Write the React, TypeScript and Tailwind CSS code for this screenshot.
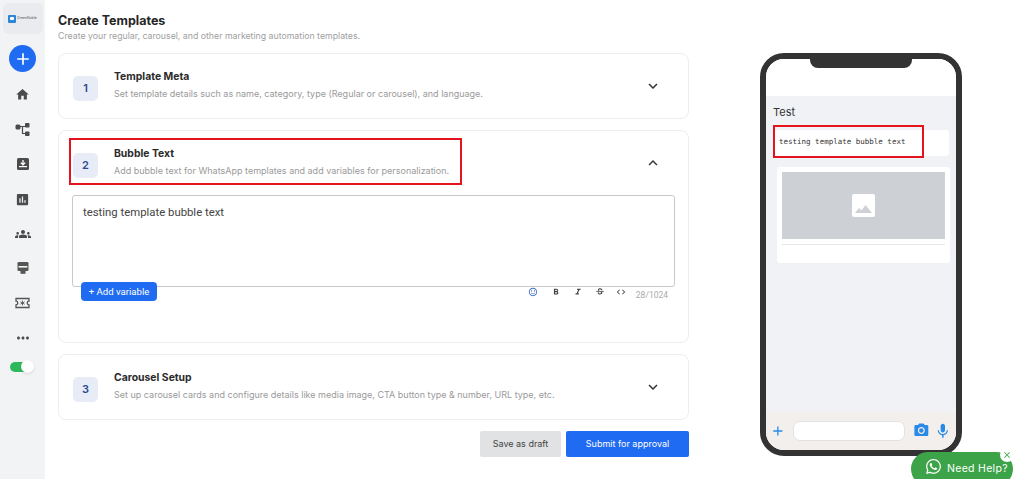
import React from "react";
import {
  MdHome, MdAssessment, MdGroups, MdMoreHoriz, MdPhotoCamera, MdMic, MdAdd, MdClose,
  MdKeyboardArrowDown, MdKeyboardArrowUp, MdOutlineSentimentSatisfied, MdFormatBold,
  MdFormatItalic, MdStrikethroughS, MdCode,
} from "react-icons/md";
import { FaWhatsapp } from "react-icons/fa";

const FlowIcon = () => (
  <svg width="15" height="15" viewBox="0 0 15 15" fill="#4b4b4b">
    <rect x="0.5" y="2.5" width="5" height="5" rx="1.5" />
    <rect x="10" y="1" width="4.5" height="4.5" rx="0.8" />
    <rect x="10" y="9.5" width="4.5" height="4.5" rx="0.8" />
    <path d="M5 4.5h6M7.5 4.5v7h3" stroke="#4b4b4b" strokeWidth="1.2" fill="none" />
  </svg>
);
const InboxIcon = () => (
  <svg width="14" height="14" viewBox="0 0 14 14">
    <rect x="1" y="1" width="12" height="12" rx="1.5" fill="#4b4b4b" />
    <path d="M7 3v4.5M4.8 5.6 7 7.8l2.2-2.2" stroke="#fff" strokeWidth="1.3" fill="none" />
    <path d="M3 9.6h8" stroke="#fff" strokeWidth="1.2" />
  </svg>
);
const MonitorIcon = () => (
  <svg width="14" height="14" viewBox="0 0 14 14" fill="#555">
    <rect x="1.5" y="1" width="11" height="9" rx="1.2" />
    <rect x="2.6" y="5" width="8.8" height="1.6" fill="#f2f3f4" />
    <rect x="4.5" y="10" width="5" height="2.8" />
  </svg>
);
const TicketIcon = () => (
  <svg width="15" height="14" viewBox="0 0 15 14" fill="none">
    <path
      d="M1 2.5h13v2.7a1.8 1.8 0 0 0 0 3.6v2.7H1V8.8a1.8 1.8 0 0 0 0-3.6z"
      stroke="#555"
      strokeWidth="1.3"
    />
    <path d="M7.5 4.6v4.8M5.4 5.8l4.2 2.4M9.6 5.8 5.4 8.2" stroke="#555" strokeWidth="0.9" />
  </svg>
);
const Logo = () => (
  <div className="flex items-center gap-[1px]">
    <div className="w-[8px] h-[8px] rounded-[1px] bg-[#2f86d6] flex items-center justify-center">
      <div className="w-[4px] h-[3px] rounded-[1px] bg-white" />
    </div>
    <span className="text-[3.5px] leading-none text-[#555] font-['Inter',sans-serif]">GreenNoble</span>
  </div>
);

function SideItem({ children, className }: { children: React.ReactNode; className: string }) {
  return <div className={`flex items-center justify-center ${className}`}>{children}</div>;
}

function StepHeader({ n, title, desc, open }: { n: string; title: string; desc: string; open?: boolean }) {
  return (
    <div className="flex items-start h-[64px] pl-[14px] pr-[26px]">
      <div className="mt-[22px] w-[25px] h-[25px] rounded-[5px] bg-[#e7ecf6] flex items-center justify-center text-[11px] font-semibold text-[#2b4a8f]">
        {n}
      </div>
      <div className="ml-[16px] mt-[16px] flex-1">
        <div className="text-[10.4px] leading-[14px] font-bold text-[#2b2b2b]">{title}</div>
        <div className="mt-[3px] text-[9px] leading-[14px] text-[#9a9a9a]">{desc}</div>
      </div>
      <div className="mt-[23px]">
        {open ? <MdKeyboardArrowUp size={18} color="#333" /> : <MdKeyboardArrowDown size={18} color="#333" />}
      </div>
    </div>
  );
}

export default function App() {
  return (
    <div className="relative flex h-[479px] w-[1024px] overflow-hidden bg-white font-['Inter',sans-serif]">
      {/* Sidebar */}
      <aside className="w-[45px] shrink-0 bg-[#f2f3f4] flex flex-col items-center">
        <div className="mt-[3px] w-[40px] h-[31px] rounded-[6px] bg-[#e9ebef] flex items-center justify-center">
          <Logo />
        </div>
        <div className="mt-[11px] w-[27px] h-[27px] rounded-full bg-[#1f6bf2] flex items-center justify-center">
          <MdAdd size={20} color="#fff" />
        </div>
        <SideItem className="mt-[15px] h-[14px]"><MdHome size={15} color="#4b4b4b" /></SideItem>
        <SideItem className="mt-[21px] h-[15px]"><FlowIcon /></SideItem>
        <SideItem className="mt-[20px] h-[14px]"><InboxIcon /></SideItem>
        <SideItem className="mt-[21px] h-[14px]"><MdAssessment size={15} color="#4b4b4b" /></SideItem>
        <SideItem className="mt-[21px] h-[14px]"><MdGroups size={16} color="#4b4b4b" /></SideItem>
        <SideItem className="mt-[20px] h-[14px]"><MonitorIcon /></SideItem>
        <SideItem className="mt-[21px] h-[14px]"><TicketIcon /></SideItem>
        <SideItem className="mt-[21px] h-[14px]"><MdMoreHoriz size={18} color="#4b4b4b" /></SideItem>
        <div className="mt-[17px] relative w-[23px] h-[10px] rounded-full bg-[#2eb85c] -ml-[3px]">
          <div className="absolute -right-[1px] -top-[2px] w-[13px] h-[13px] rounded-full bg-white shadow" />
        </div>
      </aside>

      {/* Main column */}
      <main className="ml-[13px] w-[631px] shrink-0 flex flex-col">
        <h1 className="mt-[13px] text-[12.5px] leading-[16px] font-bold text-[#262626]">Create Templates</h1>
        <p className="mt-[1px] text-[8.75px] leading-[12px] text-[#a0a0a0]">
          Create your regular, carousel, and other marketing automation templates.
        </p>
        <section className="mt-[11px] h-[66px] rounded-[8px] border border-[#eeeeee]">
          <StepHeader
            n="1"
            title="Template Meta"
            desc="Set template details such as name, category, type (Regular or carousel), and language."
          />
        </section>
        <section className="relative mt-[11px] h-[213px] rounded-[8px] border border-[#eeeeee]">
          <StepHeader
            n="2"
            title="Bubble Text"
            desc="Add bubble text for WhatsApp templates and add variables for personalization."
            open
          />
          <div className="absolute left-[10px] top-[7px] w-[393px] h-[47px] border-2 border-[#e5131d]" />
          <div className="relative mx-[13px] h-[92px] rounded-[3px] border border-[#c9c9c9] px-[10px] py-[8px] text-[11.35px] leading-[16px] text-[#444] font-['Roboto',sans-serif]">
            testing template bubble text
          </div>
          <div className="relative mx-[13px] flex items-start">
            <button className="ml-[9px] -mt-[5px] w-[76px] h-[19px] rounded-[4px] bg-[#1f6bf2] text-white text-[9.6px] leading-[19px] font-['Roboto',sans-serif]">
              + Add variable
            </button>
            <div className="ml-auto mr-[7px] flex items-start h-[14px] text-[#444]">
              <MdOutlineSentimentSatisfied size={10} color="#3b6fc4" />
              <MdFormatBold size={10} className="ml-[13px]" />
              <MdFormatItalic size={10} className="ml-[12px]" />
              <MdStrikethroughS size={10} className="ml-[12px]" />
              <MdCode size={10} className="ml-[11px]" />
              <span className="ml-[10px] mt-[2px] text-[8.5px] leading-[12px] text-[#aaa] font-['Roboto',sans-serif]">28/1024</span>
            </div>
          </div>
        </section>
        <section className="mt-[11px] h-[66px] rounded-[8px] border border-[#eeeeee]">
          <StepHeader
            n="3"
            title="Carousel Setup"
            desc="Set up carousel cards and configure details like media image, CTA button type & number, URL type, etc."
          />
        </section>
        <div className="mt-[11px] flex justify-end gap-[5px]">
          <button className="w-[81px] h-[26px] rounded-[2px] bg-[#e1e2e4] text-[9px] text-[#444]">Save as draft</button>
          <button className="w-[123px] h-[26px] rounded-[2px] bg-[#1f6bf2] text-[9px] text-white">Submit for approval</button>
        </div>
      </main>

      {/* Phone */}
      <div className="ml-[71px] mt-[53px] relative w-[202px] h-[403px] rounded-[24px] border-[6px] border-[#333333] overflow-hidden flex flex-col bg-white">
        <div className="absolute left-[44px] top-0 w-[102px] h-[9px] rounded-b-[8px] bg-[#333333]" />
        <div className="h-[37px] shrink-0 bg-white" />
        <div className="relative flex-1 bg-[#f0f2f5] px-[7px]">
          <div className="mt-[8px] text-[11px] leading-[16px] text-[#333]">Test</div>
          <div className="mt-[10px] h-[26px] rounded-[3px] bg-white pl-[6px] pb-[2px] flex items-center text-[7.5px] text-[#333] font-['DejaVu_Sans_Mono',monospace]">
            testing template bubble text
          </div>
          <div className="absolute left-[7px] top-[29px] w-[151px] h-[33px] border-2 border-[#e5131d]" />
          <div className="mt-[11px] ml-[4px] -mr-[1px] h-[96px] rounded-[3px] bg-white p-[5px]">
            <div className="h-[67px] bg-[#cdd0d4] flex items-center justify-center">
              <div className="w-[23px] h-[23px] rounded-[2px] bg-white flex items-end justify-center pb-[4px]">
                <svg width="17" height="8" viewBox="0 0 17 8" fill="#cdd0d4">
                  <path d="M0 8 4 3l2.5 2.5L10.5 0 17 8z" />
                </svg>
              </div>
            </div>
            <div className="mt-[5px] h-px bg-[#e6e6e6]" />
          </div>
        </div>
        <div className="h-[38px] shrink-0 bg-[#f3efec] flex items-center pl-[4px] pr-[4px] pb-[1px]">
          <MdAdd size={16} color="#2a8ae8" />
          <div className="ml-[7px] w-[114px] h-[20px] rounded-[7px] bg-white border border-[#e2e2e2]" />
          <MdPhotoCamera size={17} color="#2a8ae8" className="ml-[8px]" />
          <MdMic size={18} color="#2a8ae8" className="ml-[5px]" />
        </div>
      </div>

      {/* Need help floating button */}
      <div className="absolute left-[911px] top-[452px] w-[102px] h-[34px] rounded-[17px] bg-[#3da348] flex items-start pt-[6px] pl-[14px] text-white">
        <FaWhatsapp size={17} />
        <span className="ml-[5px] mt-[2px] text-[10.5px] leading-[17px] tracking-[0.3px] font-['Inter',sans-serif]">Need Help?</span>
        <div className="absolute -right-[1px] -top-[4px] w-[14px] h-[14px] rounded-full bg-white flex items-center justify-center">
          <MdClose size={10} color="#3da348" />
        </div>
      </div>
    </div>
  );
}
